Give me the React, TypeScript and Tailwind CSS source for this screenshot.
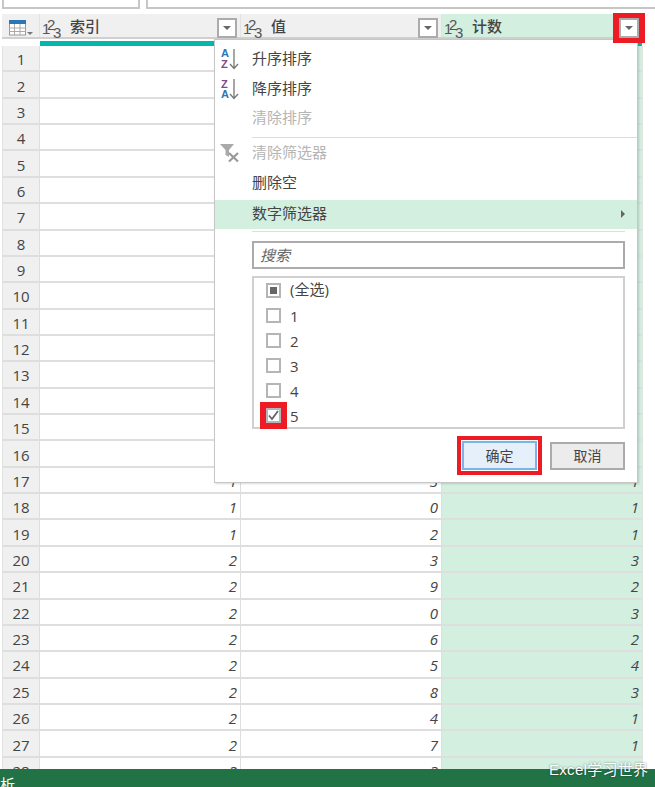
import type { ReactNode } from "react";

const rows: [number, string, string, string][] = [
  [1, "", "", ""], [2, "", "", ""], [3, "", "", ""], [4, "", "", ""],
  [5, "", "", ""], [6, "", "", ""], [7, "", "", ""], [8, "", "", ""],
  [9, "", "", ""], [10, "", "", ""], [11, "", "", ""], [12, "", "", ""],
  [13, "", "", ""], [14, "", "", ""], [15, "", "", ""], [16, "", "", ""],
  [17, "1", "3", "1"], [18, "1", "0", "1"], [19, "1", "2", "1"],
  [20, "2", "3", "3"], [21, "2", "9", "2"], [22, "2", "0", "3"],
  [23, "2", "6", "2"], [24, "2", "5", "4"], [25, "2", "8", "3"],
  [26, "2", "4", "1"], [27, "2", "7", "1"], [28, "2", "3", ""],
];

function TypeIcon() {
  return (
    <span className="relative block w-[21px] h-[23px] shrink-0 text-[#555] text-[15px] leading-[15px] font-['Liberation_Sans',sans-serif]">
      <span className="absolute left-[-1px] top-[7px]">1</span>
      <span className="absolute left-[4px] top-[3px]">2</span>
      <span className="absolute left-[10px] top-[11px]">3</span>
    </span>
  );
}

function DropButton({ marked }: { marked?: boolean }) {
  return (
    <div className="relative w-5 h-5 bg-white border-2 border-[#ababab] flex items-center justify-center shrink-0 self-end mb-[-1px]">
      <span className="w-0 h-0 border-x-[4px] border-x-transparent border-t-[4px] border-t-[#666]" />
      {marked && (
        <span className="absolute z-30 -left-[8px] -right-[8px] -top-[7px] -bottom-[7px] border-x-[6px] border-y-[5px] border-[#ed1c24]" />
      )}
    </div>
  );
}

function HeaderCol({ title, active }: { title: string; active?: boolean }) {
  return (
    <div className={`w-[200px] h-full flex items-start pl-[3px] pr-[3px] ${active ? "bg-[#d3efe0]" : "bg-[#f0f0f0]"}`}>
      <TypeIcon />
      <span className="ml-[6px] mt-[2px] text-[15px] leading-[22px] font-medium text-[#444] grow">{title}</span>
      <DropButton marked={active} />
    </div>
  );
}

function SortIcon({ flip }: { flip?: boolean }) {
  return (
    <svg width="24" height="24" viewBox="0 0 24 24" fill="none" className="block">
      <text x="1" y={flip ? 21 : 10} fontSize="11" fontWeight="700" fill="#2e75b6" fontFamily="Liberation Sans">A</text>
      <text x="1" y={flip ? 11 : 21} fontSize="11" fontWeight="700" fill="#7f4a8c" fontFamily="Liberation Sans">Z</text>
      <path d="M14 2v19M10 17l4 4.500 4-4.500" stroke="#777" strokeWidth="1.300" />
    </svg>
  );
}

function ClearFilterIcon() {
  return (
    <svg width="22" height="20" viewBox="0 0 22 20" className="block">
      <path d="M0 1h14L9 7v7L5.500 12V7z" fill="#aaa" />
      <path d="M9 10l9 8.500M18 10l-9 8.500" stroke="#999" strokeWidth="2.200" />
    </svg>
  );
}

function MenuItem({ label, disabled, icon, className }: { label: string; disabled?: boolean; icon?: ReactNode; className: string }) {
  return (
    <div className={`${className} flex items-center relative pl-[37px] pb-[2px]`}>
      {icon}
      <span className={`text-[15px] leading-[20px] ${disabled ? "text-[#b5b5b5]" : "text-[#444]"}`}>{label}</span>
    </div>
  );
}

function CheckRow({ label, state }: { label: string; state?: "mixed" | "checked" }) {
  return (
    <div className="h-[25px] flex items-center pl-[12px]">
      <span className="relative w-[15px] h-[15px] border-2 border-[#b5b5b5] bg-white flex items-center justify-center shrink-0">
        {state === "mixed" && <span className="w-[7px] h-[7px] bg-[#666]" />}
        {state === "checked" && (
          <svg width="11" height="11" viewBox="0 0 11 11" fill="none">
            <path d="M1 5.500l3 3.500 6-8" stroke="#666" strokeWidth="1.800" />
          </svg>
        )}
        {state === "checked" && (
          <span className="absolute -left-[8px] -right-[8px] -top-[8px] -bottom-[8px] border-[6px] border-[#ed1c24]" />
        )}
      </span>
      <span className={`ml-[9px] text-[15px] leading-[20px] text-[#444] ${state === "mixed" ? "mb-[3px]" : ""}`}>{label}</span>
    </div>
  );
}

function FilterMenu() {
  return (
    <div className="absolute left-[214px] top-[39px] w-[424px] h-[444px] bg-white border border-[#c6c6c6] shadow-[1px_1px_2px_rgba(0,0,0,0.15)] z-20 pt-[4px] font-['Open_Sans','Noto_Sans_CJK_SC',sans-serif]">
      <MenuItem
        label="升序排序"
        className="h-[30px]"
        icon={<span className="absolute left-[5px] top-[3px]"><SortIcon /></span>}
      />
      <MenuItem
        label="降序排序"
        className="h-[29px]"
        icon={<span className="absolute left-[5px] top-[3px]"><SortIcon flip /></span>}
      />
      <MenuItem label="清除排序" disabled className="h-[30px]" />
      <div className="h-px bg-[#dedede] ml-[37px] mt-[4px]" />
      <MenuItem
        label="清除筛选器"
        disabled
        className="h-[29px]"
        icon={<span className="absolute left-[5px] top-[5px]"><ClearFilterIcon /></span>}
      />
      <MenuItem label="删除空" className="h-[30px] mt-px" />
      <div className="h-[29px] mt-[2px] flex items-center pl-[37px] pb-[3px] bg-[#d3efe0] relative">
        <span className="text-[15px] leading-[20px] text-[#444]">数字筛选器</span>
        <span className="absolute right-[12px] top-[10px] w-0 h-0 border-y-[4px] border-y-transparent border-l-[4px] border-l-[#666]" />
      </div>
      <div className="h-px bg-[#dedede] ml-[37px] mr-[12px] mt-[2px]" />
      <div className="ml-[37px] mr-[12px] mt-[9px] h-[28px] border-2 border-[#ababab] flex items-center pl-[6px] text-[15px] italic text-[#666]">
        搜索
      </div>
      <div className="ml-[37px] mr-[12px] mt-[7px] h-[153px] border-2 border-[#d0d0d0]">
        <CheckRow label="(全选)" state="mixed" />
        <CheckRow label="1" />
        <CheckRow label="2" />
        <CheckRow label="3" />
        <CheckRow label="4" />
        <CheckRow label="5" state="checked" />
      </div>
      <div className="flex justify-end items-center gap-[8px] mr-[12px] mt-[7px]">
        <div className="w-[85px] h-[39px] border-[4px] border-[#ed1c24] bg-white p-[1px]">
          <div className="w-full h-full bg-[#e6f0fb] border-2 border-[#7db4e6] flex items-center justify-center text-[14px] text-[#444]">
            确定
          </div>
        </div>
        <div className="w-[75px] h-[28px] bg-[#ececec] border-2 border-[#ababab] flex items-center justify-center text-[14px] text-[#444]">
          取消
        </div>
      </div>
    </div>
  );
}

export default function App() {
  return (
    <div className="relative w-[655px] h-[787px] overflow-hidden bg-white font-['Liberation_Sans','Noto_Sans_CJK_SC',sans-serif]">
      <div className="flex gap-[6px] pl-[2px] h-[9px]">
        <div className="w-[138px] h-full border-x-2 border-b-2 border-[#c6c6c6]" />
        <div className="grow h-full border-l-2 border-b-2 border-[#c6c6c6]" />
      </div>

      <div className="mt-[5px] ml-[2px] w-[640px] h-[25px] flex gap-px bg-[#e2e2e2] border-b-2 border-[#d0d0d0]">
        <div className="w-[37px] h-full bg-[#f0f0f0] pl-[7px] pt-[6px]">
          <svg width="26" height="16" viewBox="0 0 26 16" fill="none" className="block">
            <rect x="0.500" y="0.500" width="16" height="14.500" fill="#fff" stroke="#999" />
            <rect x="0" y="0" width="17" height="4" fill="#2e75b6" />
            <path d="M0 8h17M0 11.500h17M5.500 4v11M11 4v11" stroke="#aaa" />
            <path d="M18 12h6l-3 3z" fill="#777" />
          </svg>
        </div>
        <HeaderCol title="索引" />
        <HeaderCol title="值" />
        <HeaderCol title="计数" active />
      </div>

      <div className="ml-[3px] w-[639px] h-[7px] flex gap-px items-start">
        <div className="w-[36px]" />
        <div className="w-[200px] h-[5px] mt-[2px] bg-[#01b8aa]" />
        <div className="w-[200px] h-[5px] mt-[2px] bg-[#01b8aa]" />
        <div className="w-[200px] h-[5px] mt-[2px] bg-[#01b8aa]" />
      </div>

      <div className="ml-[2px] w-[641px] border-x border-[#e2e2e2] font-['Open_Sans',sans-serif]">
        {rows.map(([n, a, b, c]) => (
          <div key={n} className="h-[26.37px] flex gap-px bg-[#dedede] border-b-2 border-[#dedede] text-[15px] leading-none text-[#444]">
            <div className="w-[36px] h-full bg-[#f0f0f0] pt-[3px] flex items-center justify-center">{n}</div>
            <div className="w-[200px] h-full bg-white pt-[3px] flex items-center justify-end pr-[3px] italic">{a}</div>
            <div className="w-[200px] h-full bg-white pt-[3px] flex items-center justify-end pr-[3px] italic">{b}</div>
            <div className="w-[200px] h-full bg-[#d3efe0] pt-[3px] flex items-center justify-end pr-[3px] italic">{c}</div>
          </div>
        ))}
      </div>

      <FilterMenu />

      <div className="absolute left-0 right-0 top-[769px] h-[18px] bg-[#217346] z-30 overflow-hidden">
        <span className="absolute left-0 top-[6px] text-white text-[15px] leading-[20px]">析</span>
      </div>
      <span className="absolute z-40 left-[549px] top-[761px] text-[15px] leading-[18px] tracking-[0.3px] text-white [text-shadow:0_0_2px_rgba(0,0,0,0.55)]">
        Excel学习世界
      </span>
    </div>
  );
}
